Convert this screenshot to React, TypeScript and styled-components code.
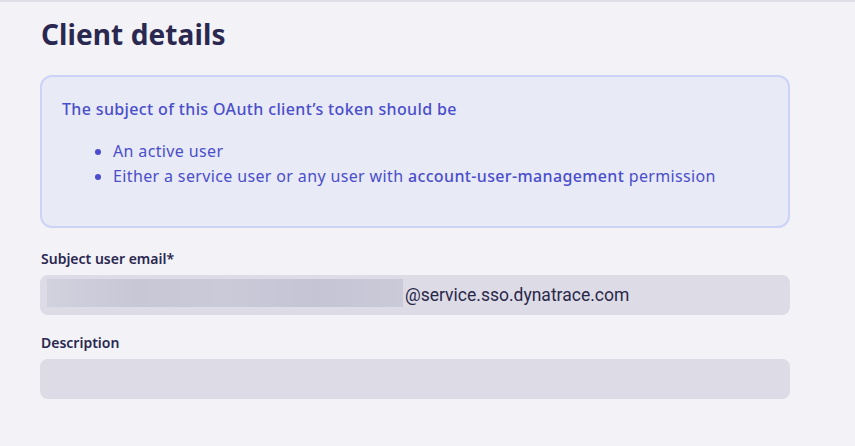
import React from "react";
import styled, { createGlobalStyle } from "styled-components";

const Global = createGlobalStyle`
  html, body { margin: 0; padding: 0; background: #f2f2f7; }
  body { font-family: "Noto Sans", "DejaVu Sans", sans-serif; }
  * { box-sizing: border-box; }
`;

const Page = styled.div`
  width: 855px;
  height: 446px;
  border-top: 2px solid #dedee6;
  padding: 12px 65px 0 40px;
  display: flex;
  flex-direction: column;
`;

const Title = styled.h1`
  margin: 0 0 21px 1px;
  font-size: 28px;
  line-height: 40px;
  font-weight: 700;
  color: #2a2850;
  letter-spacing: 0.1px;
`;

const InfoBox = styled.div`
  border: 2px solid #cdd3f6;
  border-radius: 12px;
  background: #e8eaf6;
  padding: 20px 20px 0 20px;
  height: 153px;
  color: #4a4ecb;
  font-size: 16px;
  letter-spacing: 0.36px;
  font-weight: 500;
`;

const InfoHead = styled.p`
  margin: 0;
  line-height: 24px;
`;

const List = styled.ul`
  margin: 18px 0 0 0;
  padding-left: 51px;
  font-weight: 400;
  li {
    line-height: 25px;
  }
`;

const Strong = styled.span`
  font-weight: 500;
`;

const Field = styled.div`
  display: flex;
  flex-direction: column;
  margin-top: ${(p: { $top: number }) => p.$top}px;
`;

const Label = styled.label`
  font-size: 14px;
  font-weight: 600;
  color: #2a2850;
  line-height: 20px;
  margin-bottom: 6px;
  margin-left: 1px;
`;

const Input = styled.div`
  height: 40px;
  border-radius: 8px;
  background: #dcdbe6;
  display: flex;
  align-items: center;
  padding: 0 7px;
  font-family: Roboto, "Liberation Sans", sans-serif;
  font-size: 17.5px;
  color: #2a2848;
`;

const Blur = styled.div`
  width: 356px;
  height: 28px;
  margin-top: -4px;
  background: linear-gradient(90deg, #d2d1de 0%, #c8c7d6 25%, #cbcad9 50%, #c5c4d4 75%, #cbcad9 100%);
  filter: blur(0.6px);
`;

const Suffix = styled.span`
  margin-left: 2px;
`;

export default function App() {
  return (
    <>
      <Global />
      <Page>
        <Title>Client details</Title>
        <InfoBox>
          <InfoHead>The subject of this OAuth client’s token should be</InfoHead>
          <List>
            <li>An active user</li>
            <li>
              Either a service user or any user with <Strong>account-user-management</Strong> permission
            </li>
          </List>
        </InfoBox>
        <Field $top={21}>
          <Label>Subject user email*</Label>
          <Input>
            <Blur />
            <Suffix>@service.sso.dynatrace.com</Suffix>
          </Input>
        </Field>
        <Field $top={18}>
          <Label>Description</Label>
          <Input />
        </Field>
      </Page>
    </>
  );
}
